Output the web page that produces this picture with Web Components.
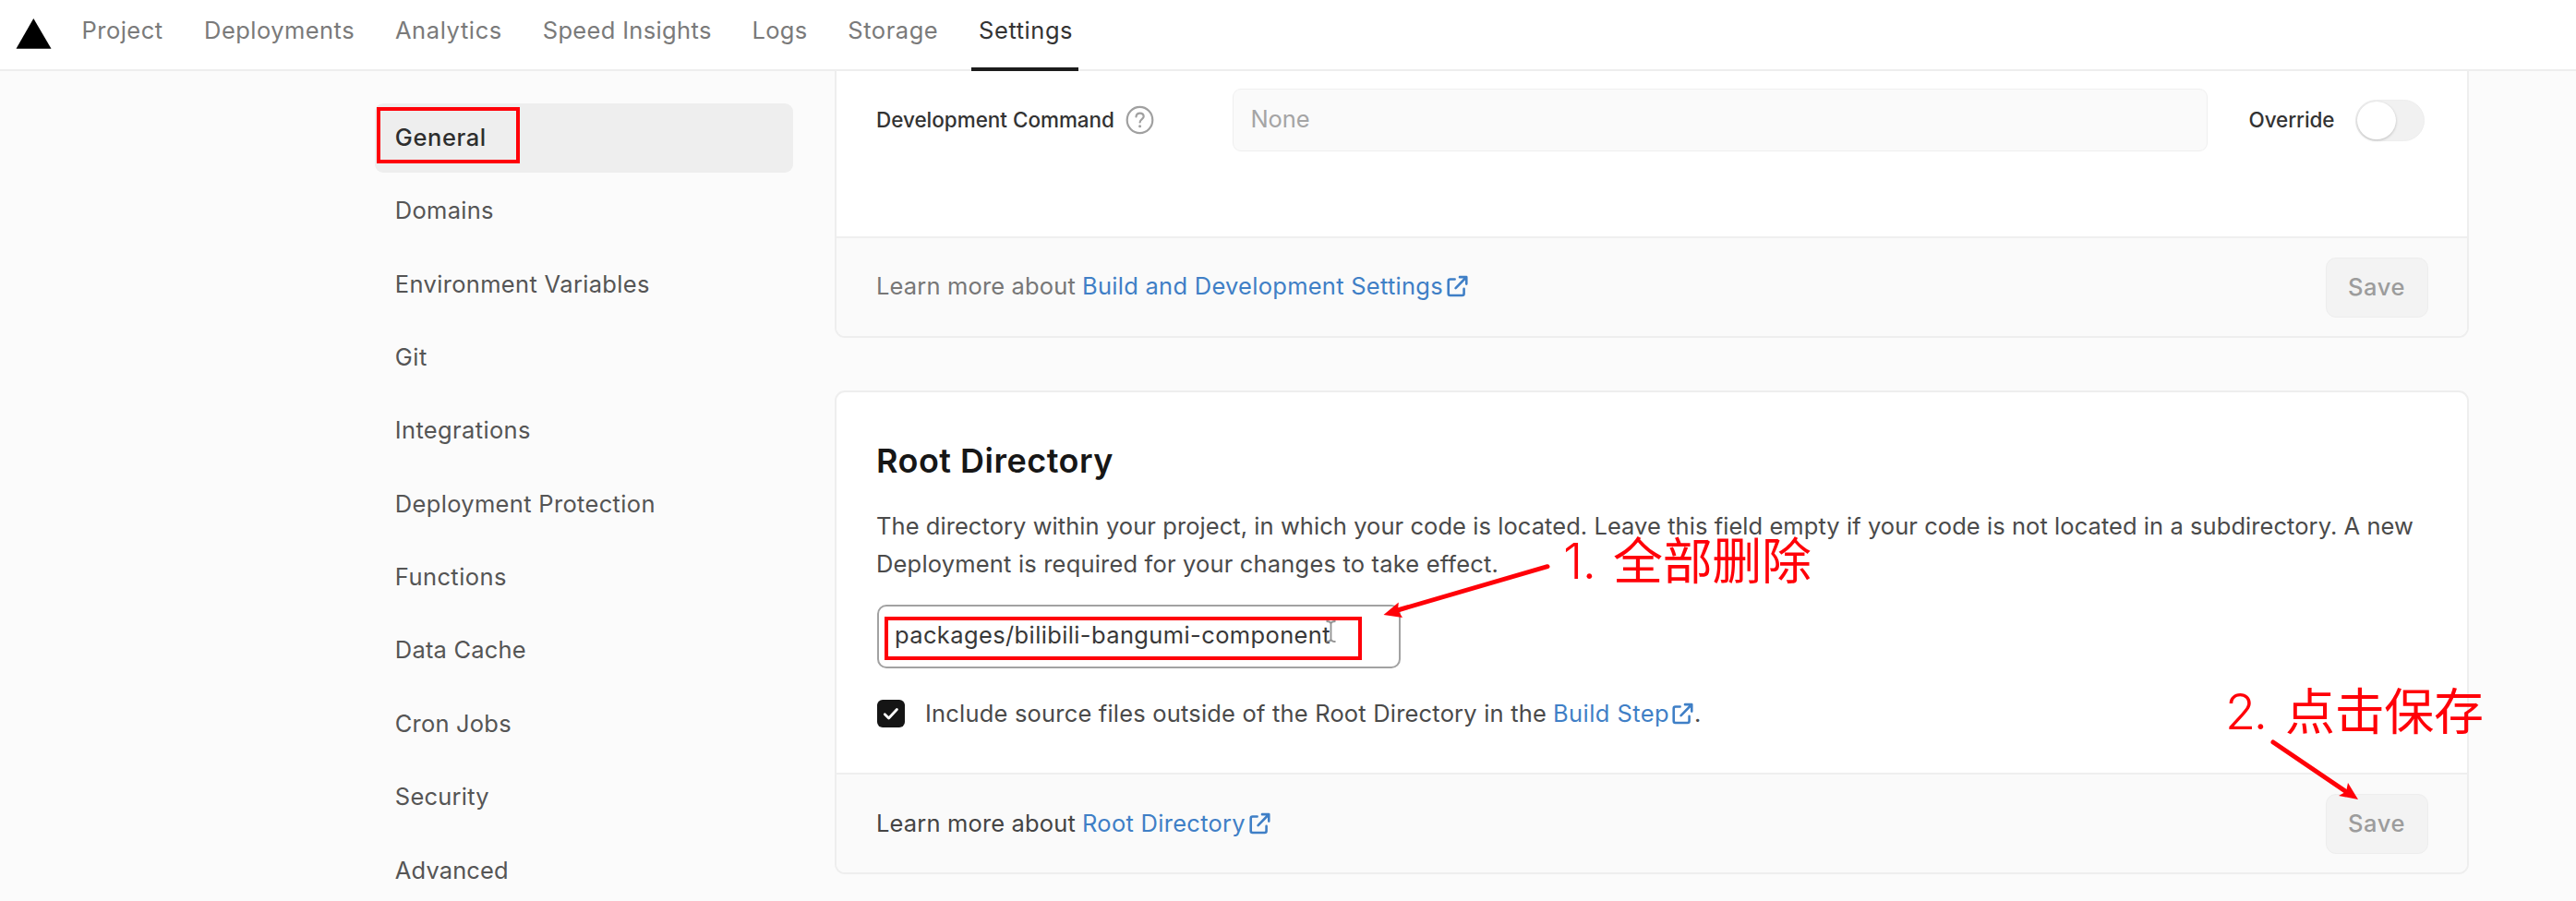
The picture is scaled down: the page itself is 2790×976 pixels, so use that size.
<!DOCTYPE html>
<html lang="en">
<head>
<meta charset="utf-8">
<title>Project Settings</title>
<style>
  html, body { margin: 0; padding: 0; }
  body { width: 2790px; height: 976px; overflow: hidden; background: #fbfbfb; font-family: Inter, "Liberation Sans", "Noto Sans CJK SC", sans-serif; color: #444; }
</style>
</head>
<body>
<settings-page></settings-page>
<script>
const define = (name, html, after) => {
  const tpl = document.createElement('template');
  tpl.innerHTML = html;
  customElements.define(name, class extends HTMLElement {
    connectedCallback() {
      if (this.shadowRoot) return;
      this.attachShadow({ mode: 'open' }).appendChild(tpl.content.cloneNode(true));
      if (after) after(this, this.shadowRoot);
    }
  });
};

/* A single line of text tracked so that it fills its measure ("w"). */
define('track-text', `
  <style>
    :host { display: inline-block; white-space: nowrap; line-height: 40px; font-size: 25.5px; flex: none; }
    span { display: inline-block; }
  </style><span><slot></slot></span>`, (el, root) => {
  const w = +el.getAttribute('w');
  const n = el.textContent.length;
  const span = root.querySelector('span');
  const natural = span.getBoundingClientRect().width;
  span.style.letterSpacing = ((w - natural) / n).toFixed(3) + 'px';
  el.style.width = w + 'px';
});

define('external-icon', `
  <style>:host { display: inline-block; width: 24px; height: 24px; flex: none; } svg { display: block; }</style>
  <svg width="23" height="24" viewBox="0 0 24 24" fill="none" stroke="#3f7fc6" stroke-width="2.7" stroke-linecap="round" stroke-linejoin="round">
    <path d="M9 4.2H3.8a2 2 0 0 0-2 2v14.200a2 2 0 0 0 2 2h13.600a2 2 0 0 0 2-2v-5.400"/>
    <path d="M14.600 1.700h7.600v7.800M21.800 2.100 10 14.200"/>
  </svg>`);

define('help-icon', `
  <style>:host { display: block; width: 31px; height: 32px; flex: none; } svg { display: block; }</style>
  <svg width="31" height="32" viewBox="0 0 31 32" fill="none" stroke="#a0a0a0" stroke-width="2.200" stroke-linecap="round">
    <ellipse cx="15.500" cy="16" rx="13.800" ry="14.200"/>
    <path d="M11.500 12.500C11.700 10.100 13.500 8.700 15.700 8.700C18 8.700 19.700 10.100 19.700 12.300C19.700 15 15.600 15.300 15.600 18.400"/>
    <circle cx="15.600" cy="22.800" r="1.500" fill="#a0a0a0" stroke="none"/>
  </svg>`);

define('nav-tab', `
  <style>
    :host { display: flex; align-items: center; height: 66px; color: #7a7a7a; }
    :host([active]) { color: #333; position: relative; }
    :host([active])::after { content: ""; position: absolute; left: -8px; width: 115.500px; top: 73px; height: 4px; background: #1c1c1c; }
  </style><slot></slot>`);

define('top-nav', `
  <style>
    :host { display: flex; height: 75px; background: #fff; border-bottom: 2px solid #eee; padding-left: 17px; align-items: flex-start; }
    svg { margin: 20px 32.500px 0 0; flex: none; }
    nav { display: flex; gap: 43.800px; }
    nav-tab:first-child { margin-right: .8px; }
  </style>
  <svg width="39" height="33" viewBox="0 0 39 33"><path d="M19.300 0 38.500 32.800H.5z" fill="#000"/></svg>
  <nav>
    <nav-tab><track-text w="88">Project</track-text></nav-tab>
    <nav-tab><track-text w="163">Deployments</track-text></nav-tab>
    <nav-tab><track-text w="116">Analytics</track-text></nav-tab>
    <nav-tab><track-text w="183">Speed Insights</track-text></nav-tab>
    <nav-tab><track-text w="60">Logs</track-text></nav-tab>
    <nav-tab><track-text w="98">Storage</track-text></nav-tab>
    <nav-tab active><track-text w="102">Settings</track-text></nav-tab>
  </nav>`);

define('side-item', `
  <style>
    :host { display: flex; align-items: center; box-sizing: border-box; height: 74.500px; padding: 0 0 1px 21.800px; color: #555; border-radius: 9px; }
    :host([active]) { background: #eee; color: #2e2e2e; font-weight: 500; }
  </style><slot></slot>`);

define('side-menu', `
  <style>:host { display: flex; flex-direction: column; gap: 4.900px; padding-top: 35px; }</style>
  <side-item active><track-text w="99">General</track-text></side-item>
  <side-item><track-text w="107">Domains</track-text></side-item>
  <side-item><track-text w="276">Environment Variables</track-text></side-item>
  <side-item><track-text w="35">Git</track-text></side-item>
  <side-item><track-text w="147">Integrations</track-text></side-item>
  <side-item><track-text w="282">Deployment Protection</track-text></side-item>
  <side-item><track-text w="121">Functions</track-text></side-item>
  <side-item><track-text w="142">Data Cache</track-text></side-item>
  <side-item><track-text w="126">Cron Jobs</track-text></side-item>
  <side-item><track-text w="102">Security</track-text></side-item>
  <side-item><track-text w="123">Advanced</track-text></side-item>`);

define('save-button', `
  <style>
    :host { display: flex; align-items: center; justify-content: center; width: 111px; height: 65px; box-sizing: border-box; border: 1px solid #ededed; border-radius: 11px; background: #f3f3f3; color: #9c9c9c; font-weight: 500; }
  </style><track-text w="62">Save</track-text>`);

define('toggle-switch', `
  <style>
    :host { display: block; width: 75px; height: 45px; box-sizing: border-box; padding: 1px; border-radius: 23px; background: #f1f1f1; border: 1px solid #eee; }
    i { display: block; width: 42px; height: 41px; border-radius: 50%; background: #fff; box-shadow: 0 1px 3px rgba(0,0,0,.22); }
  </style><i></i>`);

define('settings-card', `
  <style>
    :host { display: flex; flex-direction: column; box-sizing: border-box; border: 2px solid #eee; border-radius: 11px; background: #fff; overflow: hidden; }
    :host([clipped]) { border-top: 0; border-top-left-radius: 0; border-top-right-radius: 0; }
    .body { flex: 1; padding: 0 42.500px 0 43px; }
    footer { display: flex; align-items: center; justify-content: space-between; box-sizing: border-box; height: 108px; border-top: 2px solid #efefef; background: #fafafa; padding: 0 42.500px 0 43px; }
    .note { display: flex; align-items: center; padding-bottom: 2px; }
    :host(:not([clipped])) .note { padding-bottom: 0; }
  </style>
  <div class="body"><slot></slot></div>
  <footer><div class="note"><slot name="note"></slot></div><save-button></save-button></footer>`);

define('command-row', `
  <style>
    :host { display: flex; align-items: center; padding-top: 19px; height: 68px; color: #333; font-weight: 500; }
    help-icon { margin-left: 12px; }
    .field { box-sizing: border-box; width: 1056px; height: 68px; margin-left: 84.500px; border: 1px solid #efefef; border-radius: 9px; background: #fafafa; color: #a5a5a5; font-weight: 400; padding: 12px 0 0 19px; }
    .lbl { font-size: 22.500px; }
    .over { margin-left: 45px; }
    toggle-switch { margin-left: 22px; }
  </style>
  <track-text class="lbl" w="258">Development Command</track-text>
  <help-icon></help-icon>
  <div class="field"><track-text w="64">None</track-text></div>
  <track-text class="lbl over" w="93">Override</track-text>
  <toggle-switch></toggle-switch>`);

define('root-form', `
  <style>
    :host { display: block; color: #4a4a4a; }
    h2 { margin: 48.500px 0 0; height: 50px; font-weight: 600; color: #161616; }
    h2 track-text { font-size: 36px; line-height: 50px; }
    .desc { margin-top: 25px; display: flex; flex-direction: column; }
    .desc track-text { line-height: 41.500px; }
    .field { box-sizing: border-box; width: 567px; height: 69px; margin: 23.500px 0 0 .5px; border: 2px solid #a2a2a2; border-radius: 10px; color: #383838; padding: 11px 0 0 17.500px; background: #fff; }
    .check { display: flex; align-items: center; margin-top: 29px; height: 40px; }
    .check track-text { margin-top: -1px; }
    .box { width: 29.500px; height: 30.500px; border-radius: 6px; background: #151515; margin: 0 22.500px 0 1px; }
    .box svg { display: block; }
    .a { color: #3f7fc6; margin-left: 7px; }
    external-icon { margin-left: 3px; }
  </style>
  <h2><track-text w="257">Root Directory</track-text></h2>
  <div class="desc">
    <track-text w="1665">The directory within your project, in which your code is located. Leave this field empty if your code is not located in a subdirectory. A new</track-text>
    <track-text w="674">Deployment is required for your changes to take effect.</track-text>
  </div>
  <div class="field"><track-text w="472">packages/bilibili-bangumi-component</track-text></div>
  <div class="check">
    <div class="box"><svg width="30" height="30" viewBox="0 0 30 30" fill="none" stroke="#fff" stroke-width="2.800" stroke-linecap="round" stroke-linejoin="round"><path d="m8.300 15.700 4.300 4.300 8.800-9.500"/></svg></div>
    <track-text w="673">Include source files outside of the Root Directory in the</track-text>
    <track-text class="a" w="126">Build Step</track-text>
    <external-icon></external-icon><track-text w="8">.</track-text>
  </div>`);

define('learn-more', `
  <style>
    :host { display: flex; align-items: center; color: #777; }
    :host([dark]) { color: #444; }
    .a { color: #3f7fc6; margin-left: 7px; }
    external-icon { margin-left: 3.500px; }
  </style>
  <track-text w="216">Learn more about</track-text>
  <span class="a"></span><external-icon></external-icon>`, (el, root) => {
  const t = document.createElement('track-text');
  t.textContent = el.getAttribute('label');
  t.setAttribute('w', el.getAttribute('w'));
  root.querySelector('.a').appendChild(t);
});

/* Very faint diagonal watermark, repeated on a 45 degree lattice. */
define('water-mark', `
  <style>:host { position: absolute; inset: 0; pointer-events: none; overflow: hidden; } svg { display: block; }</style>
  <svg width="2790" height="976" fill="#000" fill-opacity=".014" font-size="28"></svg>`, (el, root) => {
  const lines = ['B08C408DA3', '355AF9ABBD', 'FC2CC178A0', '3F'];
  let out = '';
  for (let i = -8; i < 9; i++) for (let j = -8; j < 12; j++) {
    const x = 690 + 257 * i + 279 * j, y = 399 + 257 * i - 279 * j;
    if (x < -250 || x > 2850 || y < -150 || y > 1200) continue;
    out += `<g transform="translate(${x} ${y}) rotate(-45)">` +
      lines.map((l, k) => `<text y="${k * 37}" textLength="${l.length * 19.2}">${l}</text>`).join('') + '</g>';
  }
  root.querySelector('svg').innerHTML = out;
});

/* Red call-outs laid over the page. */
define('call-outs', `
  <style>
    :host { position: absolute; inset: 0; pointer-events: none; }
    svg { display: block; }
    text { font-family: "Noto Sans CJK SC", sans-serif; font-size: 54px; font-weight: 400; }
    .num { font-family: Inter, sans-serif; font-weight: 300; }
  </style>
  <svg width="2790" height="976" fill="#ff0008">
    <g fill="none" stroke="#ff0008" stroke-width="4">
      <path d="M410 118h151v57H410zM960 670h513v43H960z"/>
    </g>
    <g stroke="#ff0008" stroke-width="5" stroke-linecap="round">
      <path d="M1676 613.700 1512 661.500M2462 804 2543 859" fill="none"/>
    </g>
    <path d="M1498.500 666 1514.800 652.500 1514 661 1519 669zM2554 866 2543 848 2541 857.500 2533 862z"/>
    <text class="num" x="1693" y="627" textLength="36">1.</text>
    <text x="1747" y="628" textLength="215">全部删除</text>
    <text class="num" x="2410" y="789.500" textLength="46">2.</text>
    <text x="2475" y="790.500" textLength="215">点击保存</text>
    <path d="M1436.500 673q5 0 5 3v16q0 3-5 3M1446.500 673q-5 0-5 3v16q0 3 5 3" fill="none" stroke="#929292" stroke-width="1.800"/>
  </svg>`);

define('settings-page', `
  <style>
    :host { display: block; position: relative; width: 2790px; height: 976px; overflow: hidden; }
    main { display: grid; grid-template-columns: 453px 1770px; column-gap: 45px; padding-left: 406px; align-items: start; }
    section { display: flex; flex-direction: column; gap: 57px; }
    .one { height: 289px; }
    .two { height: 524px; }
  </style>
  <top-nav></top-nav>
  <main>
    <side-menu></side-menu>
    <section>
      <settings-card class="one" clipped>
        <command-row></command-row>
        <learn-more slot="note" label="Build and Development Settings" w="391"></learn-more>
      </settings-card>
      <settings-card class="two">
        <root-form></root-form>
        <learn-more slot="note" dark label="Root Directory" w="177"></learn-more>
      </settings-card>
    </section>
  </main>
  <water-mark></water-mark>
  <call-outs></call-outs>`);
</script>
</body>
</html>
